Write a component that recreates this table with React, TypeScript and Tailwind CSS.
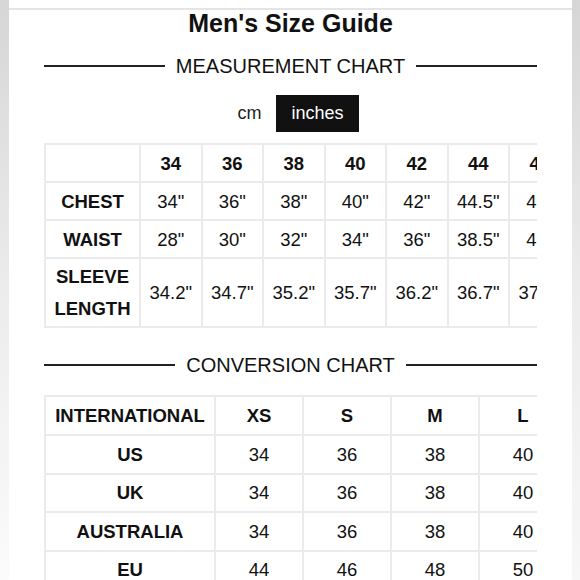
import React from "react";

const sizes = ["34", "36", "38", "40", "42", "44", "46", "48"];
const measurements = [
  { label: "CHEST", values: ['34"', '36"', '38"', '40"', '42"', '44.5"', '47"', '49"'] },
  { label: "WAIST", values: ['28"', '30"', '32"', '34"', '36"', '38.5"', '41"', '43"'] },
];
const sleeve = ['34.2"', '34.7"', '35.2"', '35.7"', '36.2"', '36.7"', '37.2"', '37.7"'];

const conversionHead = ["XS", "S", "M", "L", "XL", "XXL"];
const conversion = [
  { label: "US", values: ["34", "36", "38", "40", "42", "44"] },
  { label: "UK", values: ["34", "36", "38", "40", "42", "44"] },
  { label: "AUSTRALIA", values: ["34", "36", "38", "40", "42", "44"] },
  { label: "EU", values: ["44", "46", "48", "50", "52", "54"] },
];

const cell = "border-2 border-[#ebebeb] p-0 text-center align-middle";

function SectionHeading({ title }: { title: string }) {
  return (
    <div className="flex items-center gap-[11px]">
      <div className="h-[2px] flex-1 bg-[#222]" />
      <span className="text-[20px] leading-[24px] text-[#111]">{title}</span>
      <div className="h-[2px] flex-1 bg-[#222]" />
    </div>
  );
}

export default function App() {
  return (
    <div
      className="flex h-[580px] w-[580px] overflow-hidden bg-white text-[#111]"
      style={{ fontFamily: '"Liberation Sans", Arial, sans-serif' }}
    >
      <div className="w-[9px] shrink-0 bg-gradient-to-b from-[#d6d6d6] via-[#ececec] to-[#fbfbfb]" />

      <main className="flex-1 pt-[8px]">
        <div className="h-[2px] bg-[#e4e4e4]" />
        <h1 className="text-center text-[25px] font-bold leading-[26px]">Men's Size Guide</h1>

        <div className="px-[35px]">
          <div className="mt-[18px]">
            <SectionHeading title="MEASUREMENT CHART" />
          </div>

          <div className="mt-[17px] flex justify-center">
            <button type="button" className="h-[37px] px-[15px] text-[18px] text-[#222]">
              cm
            </button>
            <button type="button" className="h-[37px] bg-[#111] px-[15px] text-[18px] text-white">
              inches
            </button>
          </div>

          <div className="mt-[11px] w-[493px] overflow-hidden">
            <table className="w-[587px] table-fixed border-collapse text-[18.5px] leading-[31px]">
              <colgroup>
                <col className="w-[95px]" />
                {sizes.map((s) => (
                  <col key={s} className="w-[61.5px]" />
                ))}
              </colgroup>
              <tbody>
                <tr className="h-[38px]">
                  <td className={cell} />
                  {sizes.map((s) => (
                    <td key={s} className={`${cell} font-bold`}>
                      {s}
                    </td>
                  ))}
                </tr>
                {measurements.map((row) => (
                  <tr key={row.label} className="h-[38px]">
                    <td className={`${cell} font-bold`}>{row.label}</td>
                    {row.values.map((v, i) => (
                      <td key={i} className={cell}>
                        {v}
                      </td>
                    ))}
                  </tr>
                ))}
                <tr className="h-[69px]">
                  <td className={`${cell} font-bold leading-[32px]`}>
                    SLEEVE
                    <br />
                    LENGTH
                  </td>
                  {sleeve.map((v, i) => (
                    <td key={i} className={cell}>
                      {v}
                    </td>
                  ))}
                </tr>
              </tbody>
            </table>
          </div>

          <div className="mt-[25px]">
            <SectionHeading title="CONVERSION CHART" />
          </div>

          <div className="mt-[18px] w-[493px] overflow-hidden">
            <table className="w-[700px] table-fixed border-collapse text-[18.5px] leading-[31px]">
              <colgroup>
                <col className="w-[170px]" />
                {conversionHead.map((h) => (
                  <col key={h} className="w-[88px]" />
                ))}
              </colgroup>
              <tbody>
                <tr className="h-[39px]">
                  <td className={`${cell} font-bold`}>INTERNATIONAL</td>
                  {conversionHead.map((h) => (
                    <td key={h} className={`${cell} font-bold`}>
                      {h}
                    </td>
                  ))}
                </tr>
                {conversion.map((row) => (
                  <tr key={row.label} className="h-[38.5px]">
                    <td className={`${cell} font-bold`}>{row.label}</td>
                    {row.values.map((v, i) => (
                      <td key={i} className={cell}>
                        {v}
                      </td>
                    ))}
                  </tr>
                ))}
              </tbody>
            </table>
          </div>
        </div>
      </main>

      <div className="w-[9px] shrink-0 bg-gradient-to-b from-[#d6d6d6] via-[#ececec] to-[#f7f7f7]" />
    </div>
  );
}
